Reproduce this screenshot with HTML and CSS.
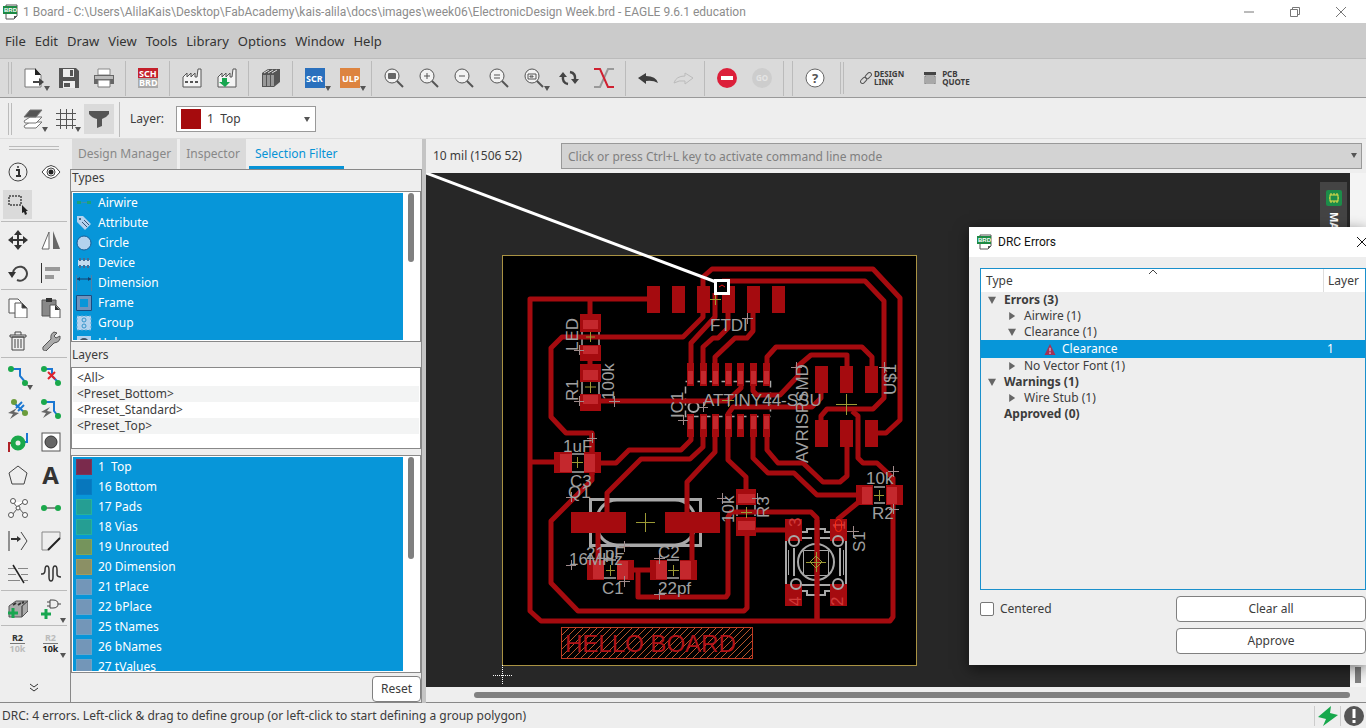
FILE: index.html
```html
<!DOCTYPE html>
<html lang="en">
<head>
    <meta charset="UTF-8">
    <meta name="viewport" content="width=device-width, initial-scale=1.0">
    <title>1 Board - EAGLE 9.6.1 education</title>
    <link rel="stylesheet" href="styles.css">
</head>
<body>
    <header class="titlebar">
        <svg class="app-icon" viewBox="0 0 16 16"><path d="M3 1h11v11l-3 3H3z" fill="#fff" stroke="#555"/><path d="M11 15v-3h3z" fill="#555"/><rect x="0" y="2" width="14" height="8" fill="#1d8a43"/><text x="1" y="8" class="brd">BRD</text></svg>
        <span class="title">1 Board - C:\Users\AlilaKais\Desktop\FabAcademy\kais-alila\docs\images\week06\ElectronicDesign Week.brd - EAGLE 9.6.1 education</span>
        <div class="window-buttons">
            <button aria-label="Minimize"><svg viewBox="0 0 12 12"><path d="M1 6h10"/></svg></button>
            <button aria-label="Restore"><svg viewBox="0 0 12 12"><path d="M1.500 3.500h7v7h-7zM3.500 3.500v-2h7v7h-2"/></svg></button>
            <button aria-label="Close"><svg viewBox="0 0 12 12"><path d="M1 1l10 10M11 1L1 11"/></svg></button>
        </div>
    </header>

    <nav class="menubar">
        <a href="#">File</a>
        <a href="#">Edit</a>
        <a href="#">Draw</a>
        <a href="#">View</a>
        <a href="#">Tools</a>
        <a href="#">Library</a>
        <a href="#">Options</a>
        <a href="#">Window</a>
        <a href="#">Help</a>
    </nav>

    <div class="toolbar actions">
        <span class="handle"></span>
        <button class="tool drop" aria-label="Export"><svg viewBox="0 0 20 20"><path d="M1 1h10l6 6v12H1z" fill="#fff" stroke="#777"/><path d="M11 0v7h6z" fill="#222"/><path d="M9 13h6v-3l5 4-5 4v-3H9z" fill="#444"/></svg></button>
        <button class="tool" aria-label="Save"><svg viewBox="0 0 20 20"><path d="M0 0h17l3 3v17H0z" fill="#555"/><path d="M4 1h11v8H4zM4 13h12v7H4z" fill="#eee"/><path d="M11 2h3v6h-3zM5 15h6v4H5z" fill="#555"/></svg></button>
        <button class="tool" aria-label="Print"><svg viewBox="0 0 20 20"><path d="M4 1h12v6H4z" fill="#fff" stroke="#888"/><path d="M0 7h20v9H0z" fill="#666"/><path d="M1 8h18v3H1z" fill="#bbb"/><path d="M4 12h12v7H4z" fill="#fff" stroke="#777"/></svg></button>
        <span class="sep"></span>
        <button class="tool" aria-label="Schematic"><svg viewBox="0 0 20 20"><rect width="20" height="10" fill="#c4202b"/><rect y="10" width="20" height="10" fill="#aaa"/><text x="1" y="9" class="tag">SCH</text><text x="1" y="18" class="tag">BRD</text></svg></button>
        <span class="sep"></span>
        <button class="tool" aria-label="Manufacturing"><svg viewBox="0 0 20 20" fill="none" stroke="#555"><path d="M1 19V9l4-4v4l4-4v4l4-4v4h2l1-8h3v18z" fill="#f4f4f4"/><path d="M3 14h3M8 14h3M13 14h3" stroke-width="2"/></svg></button>
        <button class="tool" aria-label="CAM"><svg viewBox="0 0 20 20" fill="none" stroke="#555"><path d="M1 19V9l4-4v4l4-4v4l4-4v4h2l1-8h3v18z" fill="#f4f4f4"/><path d="M5 10h5v4h3l-5 5-6-5h3z" fill="#18a650" stroke="none"/></svg></button>
        <span class="sep"></span>
        <button class="tool" aria-label="Library"><svg viewBox="0 0 20 20"><path d="M1 5l6-4h12v13l-6 5H1z" fill="#555"/><path d="M2 7h3v11H2zM6 7h3v11H6zM10 7h3v11h-3z" fill="#999"/><path d="M3 5l5-3M7 5l5-3M11 5l5-3" stroke="#ddd"/></svg></button>
        <span class="sep"></span>
        <button class="tool drop" aria-label="Script"><svg viewBox="0 0 20 20"><rect width="20" height="20" fill="#2a70bd"/><text x="1" y="14" class="tag">SCR</text></svg></button>
        <button class="tool drop" aria-label="ULP"><svg viewBox="0 0 20 20"><rect width="20" height="20" fill="#dd8440"/><text x="2" y="14" class="tag">ULP</text></svg></button>
        <span class="sep"></span>
        <button class="tool" aria-label="Zoom fit"><svg viewBox="0 0 20 20"><g class="lens"><circle cx="8" cy="8" r="7"/><path d="M13 13l6 6" stroke-width="2"/></g><rect x="4" y="5" width="8" height="6" rx="1" fill="#666"/></svg></button>
        <button class="tool" aria-label="Zoom in"><svg viewBox="0 0 20 20" class="lens"><circle cx="8" cy="8" r="7"/><path d="M13 13l6 6" stroke-width="2"/><path d="M5 8h6M8 5v6"/></svg></button>
        <button class="tool" aria-label="Zoom out"><svg viewBox="0 0 20 20" class="lens"><circle cx="8" cy="8" r="7"/><path d="M13 13l6 6" stroke-width="2"/><path d="M5 8h6"/></svg></button>
        <button class="tool" aria-label="Zoom redraw"><svg viewBox="0 0 20 20" class="lens"><circle cx="8" cy="8" r="7"/><path d="M13 13l6 6" stroke-width="2"/><path d="M5 7h6M5 10h6"/></svg></button>
        <button class="tool drop" aria-label="Zoom select"><svg viewBox="0 0 20 20" class="lens"><circle cx="8" cy="8" r="7"/><path d="M13 13l6 6" stroke-width="2"/><path d="M4 6h8v5H4zM6 8h3v1H6z"/></svg></button>
        <button class="tool" aria-label="Refresh"><svg viewBox="0 0 20 20" fill="none" stroke="#444" stroke-width="2.500"><path d="M9 16Q3 15 4 8M11 4q6 1 5 8"/><path d="M4 4l4 5H0zM16 16l-4-5h8z" fill="#444" stroke="none"/></svg></button>
        <button class="tool" aria-label="Switch"><svg viewBox="0 0 20 20" fill="none" stroke-width="2"><path d="M20 1h-6L6 19H0" stroke="#999"/><path d="M0 1h6l8 18h6" stroke="#cf2030"/></svg></button>
        <span class="sep"></span>
        <button class="tool" aria-label="Undo"><svg viewBox="0 0 20 20"><path d="M0 10l8-5v3q10 0 12 7-5-3-12-2v3z" fill="#3c3c3c"/></svg></button>
        <button class="tool" aria-label="Redo"><svg viewBox="0 0 20 20"><path d="M20 10l-8-5v3Q3 8 1 15q5-3 11-2v3z" fill="none" stroke="#bbb"/></svg></button>
        <span class="sep"></span>
        <button class="tool" aria-label="Stop"><svg viewBox="0 0 20 20"><circle cx="10" cy="10" r="10" fill="#dc1f3a"/><path d="M4 8h12v4H4z" fill="#fff"/></svg></button>
        <button class="tool" aria-label="Go"><svg viewBox="0 0 20 20"><circle cx="10" cy="10" r="10" fill="#cdcdcd"/><text x="4" y="13" class="go">GO</text></svg></button>
        <span class="sep"></span>
        <span class="sep"></span>
        <button class="tool" aria-label="Help"><svg viewBox="0 0 20 20"><circle cx="10" cy="10" r="9" fill="#fff" stroke="#666"/><text x="7" y="15" class="question">?</text></svg></button>
        <span class="handle"></span>
        <button class="link-tool"><svg viewBox="0 0 12 12" fill="none" stroke="#555"><rect x="0" y="6" width="7" height="4" rx="2" transform="rotate(-45 4 8)"/><rect x="5" y="2" width="7" height="4" rx="2" transform="rotate(-45 8 4)"/></svg><span>DESIGN<br>LINK</span></button>
        <button class="link-tool"><svg viewBox="0 0 12 12"><path d="M0 0h12v3H0z" fill="#444"/><path d="M1 4h10v8H1zM2 6h8M2 8h8M2 10h8" fill="none" stroke="#777"/></svg><span>PCB<br>QUOTE</span></button>
    </div>

    <div class="toolbar options">
        <span class="handle"></span>
        <button class="tool drop" aria-label="Layers"><svg viewBox="0 0 20 20" stroke="#777"><path d="M1 17l6-4h12l-6 6H2z" fill="#fff"/><path d="M1 12l6-4h12l-6 6H2z" fill="#fff"/><path d="M1 8l6-7h12l-6 7z" fill="#555"/></svg></button>
        <button class="tool drop" aria-label="Grid"><svg viewBox="0 0 20 20" stroke="#555"><path d="M4.500 0v20M10.500 0v20M16.500 0v20M0 4.500h20M0 10.500h20M0 16.500h20"/></svg></button>
        <button class="tool active" aria-label="Filter"><svg viewBox="0 0 20 20"><path d="M0 2h20v3q-3 4-7 5v7l-5 2v-9Q3 9 0 5z" fill="#555"/></svg></button>
        <span class="sep"></span>
        <label for="layer">Layer:</label>
        <div class="layer-select">
            <span class="swatch"></span>
            <select id="layer"><option>1&nbsp; Top</option></select>
        </div>
    </div>

    <main class="workspace">
        <aside class="palette">
            <span class="grip"></span>
            <div class="tools">
                <button aria-label="Info"><svg viewBox="0 0 20 20"><circle cx="10" cy="10" r="9" fill="none" stroke="#444"/><path d="M8 8h3v6h2M8 14h3" fill="none" stroke="#333" stroke-width="2"/><circle cx="10" cy="5" r="1" fill="#333"/></svg></button>
                <button aria-label="Show"><svg viewBox="0 0 20 20"><path d="M1 10q9-13 18 0-9 13-18 0z" fill="#fff" stroke="#444"/><circle cx="10" cy="10" r="4" fill="none" stroke="#444"/><circle cx="10" cy="10" r="2.500" fill="#222"/></svg></button>
                <button class="active" aria-label="Group"><svg viewBox="0 0 20 20"><rect x="1" y="1" width="12" height="9" fill="none" stroke="#444" stroke-width="1.500" stroke-dasharray="2 1"/><path d="M14 10v8l2-1 1 3 2-1-1-3h2z" fill="#222"/></svg></button>
                <span></span>
                <hr>
                <button aria-label="Move"><svg viewBox="0 0 20 20"><path d="M10 0l4 5h-3v4h4V6l5 4-5 4v-3h-4v4h3l-4 5-4-5h3v-4H5v3l-5-4 5-4v3h4V5H6z" fill="#333"/></svg></button>
                <button aria-label="Mirror"><svg viewBox="0 0 20 20"><path d="M8 2v17H1z" fill="#fff" stroke="#666"/><path d="M12 1v18h7z" fill="#666"/></svg></button>
                <button aria-label="Rotate"><svg viewBox="0 0 20 20"><path d="M5 10a7 7 0 1 1 4 7" fill="none" stroke="#444" stroke-width="2"/><path d="M0 9h8l-4 6z" fill="#333"/></svg></button>
                <button aria-label="Align"><svg viewBox="0 0 20 20"><path d="M.500 0v20" stroke="#333"/><path d="M4 4h15v4H4zM4 12h9v4H4z" fill="#999"/></svg></button>
                <hr>
                <button aria-label="Copy"><svg viewBox="0 0 20 20" fill="#fff" stroke="#555"><path d="M1 1h9l3 3v11H1z"/><path d="M7 5h7l5 5v10H7z"/><path d="M14 5v5h5z" fill="#333"/></svg></button>
                <button aria-label="Paste"><svg viewBox="0 0 20 20"><path d="M1 2h14v16H1z" fill="#888" stroke="#555"/><path d="M5 0h6v4H5z" fill="#333"/><path d="M9 7h6l4 4v9H9z" fill="#fff" stroke="#555"/><path d="M14 7v5h5z" fill="#333"/></svg></button>
                <button aria-label="Delete"><svg viewBox="0 0 20 20" fill="none" stroke="#444"><path d="M4 6h12v13H4zM2 4h16v2H2zM7 4V1h6v3"/><path d="M7 8v9M10 8v9M13 8v9"/></svg></button>
                <button aria-label="Change"><svg viewBox="0 0 20 20"><path d="M2 16l8-8q-1-5 3-7l3 1-3 3 2 2 4-2q1 6-6 7l-8 8q-4 0-3-4z" fill="#aaa" stroke="#555"/></svg></button>
                <hr>
                <button class="drop" aria-label="Route"><svg viewBox="0 0 20 20"><path d="M2 3h10v7l6 7" fill="none" stroke="#1b77d2" stroke-width="2"/><circle cx="3" cy="3" r="3" fill="#1aa84b"/><circle cx="17" cy="17" r="3" fill="#1aa84b"/></svg></button>
                <button aria-label="Ripup"><svg viewBox="0 0 20 20"><path d="M2 3h9v7l7 7" fill="none" stroke="#1b77d2" stroke-width="2"/><circle cx="3" cy="3" r="3" fill="#1aa84b"/><circle cx="17" cy="17" r="3" fill="#1aa84b"/><path d="M7 6l7 7M14 6l-7 7" stroke="#e0222c" stroke-width="2"/></svg></button>
                <button aria-label="Autoroute"><svg viewBox="0 0 20 20"><path d="M5 3l12 11" stroke="#1b77d2" stroke-width="2"/><path d="M8 9l6-6M10 12l6-6" stroke="#1b77d2" stroke-width="2"/><circle cx="6" cy="3" r="3" fill="#6b9c3c"/><circle cx="17" cy="14" r="3" fill="#6b9c3c"/><path d="M9 9l-9 5 5 1-3 5 9-6-5-1z" fill="#666"/></svg></button>
                <button aria-label="Quick route"><svg viewBox="0 0 20 20"><path d="M2 3h11v9l4 5" fill="none" stroke="#1b77d2" stroke-width="2"/><circle cx="3" cy="3" r="3" fill="#1aa84b"/><circle cx="17" cy="17" r="3" fill="#1aa84b"/><path d="M9 8l-9 5 5 1-3 5 9-6-5-1z" fill="#666"/></svg></button>
                <button aria-label="Via"><svg viewBox="0 0 20 20"><path d="M1 20v-9h6" fill="none" stroke="#b02228" stroke-width="2"/><path d="M14 10h5V1" fill="none" stroke="#1b77d2" stroke-width="2"/><circle cx="10" cy="11" r="5" fill="#e9eeea" stroke="#1aa84b" stroke-width="5"/></svg></button>
                <button aria-label="Hole"><svg viewBox="0 0 20 20"><rect x="1" y="1" width="18" height="18" fill="#fff" stroke="#555"/><circle cx="10" cy="10" r="6" fill="#666" stroke="#333"/></svg></button>
                <button aria-label="Polygon"><svg viewBox="0 0 20 20"><path d="M10 1l9 7-3 11H4L1 8z" fill="none" stroke="#444"/></svg></button>
                <button aria-label="Text"><span class="letter">A</span></button>
                <button aria-label="Ratsnest"><svg viewBox="0 0 20 20" fill="#fff" stroke="#555"><path d="M5 4l4 5 7-5M10 9l6 7M4 17l5-6"/><circle cx="5" cy="3" r="2.500"/><circle cx="17" cy="4" r="2.500"/><circle cx="10" cy="10" r="2"/><circle cx="3" cy="17" r="2.500"/><circle cx="17" cy="17" r="2.500"/></svg></button>
                <button aria-label="Signal"><svg viewBox="0 0 20 20"><path d="M2 10h16" stroke="#888" stroke-width="2"/><circle cx="3" cy="10" r="3" fill="#1aa84b"/><circle cx="17" cy="10" r="3" fill="#1aa84b"/></svg></button>
                <button aria-label="Split"><svg viewBox="0 0 20 20"><path d="M1 0v20" stroke="#333"/><path d="M13 1l6 9-6 9" fill="none" stroke="#444"/><path d="M3 8h9" stroke="#333" stroke-width="2"/><path d="M9 5l4 3-4 3z" fill="#333"/></svg></button>
                <button aria-label="Miter"><svg viewBox="0 0 20 20"><path d="M7 19H1V1h18v6" fill="none" stroke="#888"/><path d="M7 19L19 7" stroke="#222" stroke-width="2"/></svg></button>
                <button aria-label="Slice"><svg viewBox="0 0 20 20"><path d="M0 4.500h7M10 4.500h10M0 10.500h8M13 10.500h7M0 16.500h12M16 16.500h4" stroke="#888"/><path d="M5 1l11 18" stroke="#222" stroke-width="1.500"/></svg></button>
                <button aria-label="Meander"><svg viewBox="0 0 20 20"><path d="M0 10h1q3 0 3-4 0-4 2-4t2 4v7q0 4 2 4t2-4V6q0-4 2-4t2 4v4q0 3 4 3" fill="none" stroke="#333" stroke-width="1.500"/></svg></button>
                <hr>
                <button aria-label="Add part"><svg viewBox="0 0 20 20"><path d="M1 7l7-5h12l-6 5v11H1zM14 7l6-5v10l-6 6z" fill="#aaa" stroke="#555"/><path d="M5 6l3-2M10 6l3-2M14 4l2-1" stroke="#333" stroke-width="2"/><path d="M0 14h10M5 9v10" stroke="#18a650" stroke-width="3"/></svg></button>
                <button class="drop" aria-label="Add gate"><svg viewBox="0 0 20 20"><path d="M9 1h3q5 0 5 4t-5 4H9zM6 3h3M6 7h3M17 5h3" fill="none" stroke="#444"/><path d="M0 15h10M5 10v10" stroke="#18a650" stroke-width="3"/></svg></button>
                <hr>
                <button aria-label="Name"><span class="fraction">R2<i>10k</i></span></button>
                <button class="drop" aria-label="Value"><span class="fraction value">R2<i>10k</i></span></button>
            </div>
            <button class="more" aria-label="More"><svg viewBox="0 0 10 10" fill="none" stroke="#333"><path d="M1 1l4 3 4-3M1 5l4 3 4-3"/></svg></button>
        </aside>

        <section class="panel">
            <div class="tabs">
                <button>Design Manager</button>
                <button>Inspector</button>
                <button class="current">Selection Filter</button>
            </div>
            <div class="panel-body">
                <h2>Types</h2>
                <div class="listbox types">
                    <ul>
                        <li><svg viewBox="0 0 16 16"><path d="M1 7.500h14" stroke="#3a8fae"/><path d="M1 7.500h4M11 7.500h4" stroke="#18a27c" stroke-width="3"/></svg>Airwire</li>
                        <li><svg viewBox="0 0 16 16"><path d="M1 1h6l8 8-6 6-8-8z" fill="#b3d2ee"/><circle cx="4" cy="4" r="1" fill="#246"/><path d="M6 7l5 5M8 5l5 5" stroke="#357"/></svg>Attribute</li>
                        <li><svg viewBox="0 0 16 16"><circle cx="8" cy="8" r="7" fill="#b3d2ee" stroke="#155d97"/></svg>Circle</li>
                        <li><svg viewBox="0 0 16 16"><path d="M2 5h12v6H2z" fill="#c2dbef"/><path d="M4 3v3M8 3v3M12 3v3M4 10v3M8 10v3M12 10v3" stroke="#456b94" stroke-width="2"/></svg>Device</li>
                        <li><svg viewBox="0 0 16 16"><path d="M.500 0v16M15.500 0v16" stroke="#5180a8"/><path d="M1 4h14" stroke="#163f6c"/><path d="M1 4l3-2v4zM15 4l-3-2v4z" fill="#163f6c"/></svg>Dimension</li>
                        <li><svg viewBox="0 0 16 16"><rect x="2" y="2" width="12" height="12" fill="#0796d9" stroke="#7194bd" stroke-width="4"/><path d="M0.500.500h15v15H.500z" fill="none" stroke="#184c81"/></svg>Frame</li>
                        <li><svg viewBox="0 0 16 16"><rect x="1" y="1" width="14" height="14" fill="#b3d2ee" stroke="#5ea8d5" stroke-dasharray="2"/><circle cx="8" cy="5" r="2" fill="none" stroke="#3494c9"/><circle cx="8" cy="11" r="2" fill="none" stroke="#3494c9"/></svg>Group</li>
                        <li><svg viewBox="0 0 16 16"><rect x="1" y="1" width="14" height="14" fill="#b3d2ee"/><circle cx="8" cy="8" r="5" fill="#456"/></svg>Hole</li>
                    </ul>
                    <span class="scroll"></span>
                </div>
                <h2 class="layers-title">Layers</h2>
                <ul class="presets">
                    <li>&lt;All&gt;</li>
                    <li>&lt;Preset_Bottom&gt;</li>
                    <li>&lt;Preset_Standard&gt;</li>
                    <li>&lt;Preset_Top&gt;</li>
                </ul>
                <div class="listbox layers">
                    <ul>
                        <li><span class="chip top"></span>1&nbsp; Top</li>
                        <li><span class="chip bottom"></span>16 Bottom</li>
                        <li><span class="chip green"></span>17 Pads</li>
                        <li><span class="chip green"></span>18 Vias</li>
                        <li><span class="chip olive"></span>19 Unrouted</li>
                        <li><span class="chip sand"></span>20 Dimension</li>
                        <li><span class="chip"></span>21 tPlace</li>
                        <li><span class="chip"></span>22 bPlace</li>
                        <li><span class="chip"></span>25 tNames</li>
                        <li><span class="chip"></span>26 bNames</li>
                        <li><span class="chip"></span>27 tValues</li>
                    </ul>
                    <span class="scroll"></span>
                </div>
                <button class="push reset">Reset</button>
            </div>
        </section>

        <section class="editor">
            <div class="command">
                <span class="coords">10 mil (1506 52)</span>
                <div class="command-line"><input type="text" aria-label="Command line" placeholder="Click or press Ctrl+L key to activate command line mode"></div>
            </div>
            <div class="canvas-row">
                <svg class="board" viewBox="426 173 924 514" preserveAspectRatio="xMinYMin slice">
                    <defs>
                        <pattern id="hatch" width="7" height="7" patternUnits="userSpaceOnUse"><path d="M-1 8L8-1M-1 1l2-2M6 8l2-2" stroke="#b8562c"/></pattern>
                    </defs>
                    <rect x="502.500" y="255.500" width="414" height="410" fill="#000" stroke="#a99243"/>

                    <!-- part outlines -->
                    <g class="outline">
                        <rect x="685.500" y="381.500" width="85" height="35" stroke-width="1.500" stroke-dasharray="7 5"/>
                        <rect x="590.500" y="499.500" width="110" height="46" stroke-width="3"/>
                        <rect x="597" y="500" width="98" height="45" rx="20" stroke-width="3"/>
                        <path d="M582 331v15M599 331v15M582 381v14M599 381v14M737 501v15M755 501v15M572 454h12M572 472h12M604 560h12M604 578h12M667 560h12M667 578h12M874 487h11M874 503h11" stroke-width="1.500"/>
                        <circle cx="693.500" cy="407" r="5"/>
                    </g>

                    <!-- copper traces -->
                    <g class="trace">
                        <path d="M650 299H530v312l11 10h349l3-4V478l-16-15h-14l-5-5v-42l-6-5"/>
                        <path d="M590 299v20M590 355v15M530 462h30"/>
                        <path d="M592 475v-42h-26l-15-16v-69l11-11h121l20-20v-40l9-8h161l27 29v122l-14 13h-15"/>
                        <path d="M592 433v47l-41 41v62l27 28h166l3-3v-75"/>
                        <path d="M722 281h143l19 20v97l-11 11h-46l-6 7v10"/>
                        <path d="M715 293v24l-24 26v30"/>
                        <path d="M728 310v18l-10 10h-5l-10 9v26"/>
                        <path d="M753 310v21l-6 7h-12l-20 19v15"/>
                        <path d="M767 372v-15l9-10h86l10 10v15"/>
                        <path d="M753 380v11l4 4h23l18-19v-10l13-11h36v15"/>
                        <path d="M741 380v8l-14 13H600"/>
                        <path d="M746 490v-13l-18-17v-46l5-7h79l9-9v-8"/>
                        <path d="M691 425v15l-10 10h-52l-13 13h-16"/>
                        <path d="M703 425v22l-13 12h-49l-34 34v22"/>
                        <path d="M715 425v27l-28 30v34"/>
                        <path d="M753 425v33l15 15h26l23 22h44"/>
                        <path d="M767 425v25l11 13h25l20 19h17l7-6v-40"/>
                        <path d="M638 570v27h88l2-3v-77l3-5h80l6 6v103"/>
                        <path d="M625 570h30M598 520v45M692 520v45M753 530h40M860 501l-22 18v10"/>
                    </g>

                    <!-- pads -->
                    <g class="pad">
                        <path d="M647 286h13v27h-13zM672 286h13v27h-13zM697 286h13v27h-13zM722 286h13v27h-13zM747 286h13v27h-13zM772 286h13v27h-13z"/>
                        <path d="M815 366h13v27h-13zM840 366h13v27h-13zM865 366h13v27h-13zM815 420h13v27h-13zM840 420h13v27h-13zM865 420h13v27h-13z"/>
                        <path d="M571 512h55v21h-55zM665 512h55v21h-55z"/>
                        <path d="M580 314h21v18h-21zM580 345h21v16h-21zM580 364h21v18h-21zM580 394h21v17h-21z"/>
                        <path d="M554 452h18v21h-18zM584 452h17v21h-17zM587 560h17v20h-17zM617 560h17v20h-17zM650 560h17v20h-17zM680 560h17v20h-17zM856 485h17v20h-17zM886 485h17v20h-17z"/>
                        <path d="M736 489h20v16h-20zM736 517h20v19h-20z"/>
                        <path d="M785 519h17v22h-17zM830 519h17v22h-17zM785 584h17v22h-17zM830 584h17v22h-17z"/>
                        <path d="M687 363h7v23h-7zM700 363h7v23h-7zM712 363h7v23h-7zM725 363h7v23h-7zM737 363h7v23h-7zM750 363h7v23h-7zM763 363h7v23h-7z"/>
                        <path d="M687 414h7v23h-7zM700 414h7v23h-7zM712 414h7v23h-7zM725 414h7v23h-7zM737 414h7v23h-7zM750 414h7v23h-7zM763 414h7v23h-7z"/>
                    </g>
                    <g class="mask">
                        <path d="M583 320h15v9h-15zM583 346h15v8h-15zM583 370h15v10h-15zM583 395h15v9h-15z"/>
                        <path d="M560 454h12v18h-12zM584 454h11v18h-11zM593 561h11v18h-11zM617 561h11v18h-11zM656 561h11v18h-11zM680 561h11v18h-11zM862 487h10v17h-10zM887 487h10v17h-10z"/>
                        <path d="M738 494h17v9h-17zM738 521h17v9h-17z"/>
                        <path d="M688 371h5v13h-5zM701 371h5v13h-5zM713 371h5v13h-5zM726 371h5v13h-5zM738 371h5v13h-5zM751 371h5v13h-5zM764 371h5v13h-5z"/>
                        <path d="M688 416h5v13h-5zM701 416h5v13h-5zM713 416h5v13h-5zM726 416h5v13h-5zM738 416h5v13h-5zM751 416h5v13h-5zM764 416h5v13h-5z"/>
                    </g>

                    <!-- push button S1 -->
                    <g class="outline">
                        <circle cx="816" cy="562" r="18"/>
                        <path d="M803.500 550.500h25v25h-25z" stroke-width="1"/>
                        <path d="M786 541v43M846 541v43M794 548v28M840 548v28M802 532h5v-3h18v3h5M802 591h5v4h18v-4h5M802 538h10M820 538h10M802 585h28"/>
                        <path d="M788.500 550v25M843.500 550v25" stroke-width="1"/>
                        <circle cx="794" cy="541" r="5"/><circle cx="838" cy="541" r="5"/><circle cx="796" cy="584" r="5"/><circle cx="838" cy="584" r="5"/>
                    </g>
                    <path class="trace" d="M817 520v100"/>

                    <!-- origins -->
                    <path class="origin" d="M586 337h9M590.500 332v10M585 387h11M590.500 382v11M572 462.500h11M577.500 457v11M606 570.500h9M610.500 565v11M668 570.500h11M673.500 565v11M874 495.500h10M879.500 490v11M741 512.500h11M746.500 507v11M636 522.500h19M645.500 513v19M836 404.500h21M846.500 394v21M710 299.500h11M715.500 294v11M722 400.500h12M728.500 394v13M806 562.500h20M816.500 552v20M810 562l6-6 6 6-6 6z"/>
                    <path class="cross" d="M574 350.500h10M579.500 345v10M574 401.500h10M579.500 396v10M609 401.500h11M614.500 396v11M587 438.500h10M592.500 433v10M566 497.500h10M571.500 492v10M566 565.500h10M571.500 560v10M619 546.500h11M624.500 541v11M619 581.500h11M624.500 576v11M654 558.500h11M659.500 553v11M654 594.500h11M659.500 589v11M742 318.500h11M747.500 313v11M791 367.500h11M796.500 362v11M879 367.500h11M884.500 362v11M678 420.500h10M683.500 415v10M698 407.500h10M703.500 402v10M888 471.500h11M893.500 466v11M889 509.500h10M893.500 504v10M717 498.500h11M722.500 493v11M752 498.500h11M757.500 493v11M847 531.500h12M853.500 526v12"/>

                    <g class="label">
                        <text x="710" y="331">FTDI</text>
                        <text x="703" y="406">ATTINY44-SSU</text>
                        <text x="563" y="452">1uF</text>
                        <text x="570" y="487">C3</text>
                        <text x="568" y="498">Q1</text>
                        <text x="586" y="559">21pF</text>
                        <text x="569" y="565">16MHz</text>
                        <text x="658" y="558">C2</text>
                        <text x="602" y="594">C1</text>
                        <text x="658" y="594">22pf</text>
                        <text x="866" y="484">10k</text>
                        <text x="872" y="519">R2</text>
                        <text transform="translate(578 351) rotate(-90)">LED</text>
                        <text transform="translate(578 401) rotate(-90)">R1</text>
                        <text transform="translate(614 400) rotate(-90)">100k</text>
                        <text transform="translate(683 418) rotate(-90)">IC1</text>
                        <text transform="translate(808 463) rotate(-90)">AVRISPSMD</text>
                        <text transform="translate(896 395) rotate(-90)">U$1</text>
                        <text transform="translate(734 523) rotate(-90)">10k</text>
                        <text transform="translate(769 518) rotate(-90)">R3</text>
                        <text transform="translate(865 552) rotate(-90)">S1</text>
                        <g class="pin">
                            <text transform="translate(801 527) rotate(-90)">3</text>
                            <text transform="translate(845 530) rotate(-90)">1</text>
                            <text transform="translate(801 606) rotate(-90)">4</text>
                            <text transform="translate(843 606) rotate(-90)">2</text>
                        </g>
                    </g>
                    <rect x="835.500" y="519.500" width="6" height="12" rx="3" fill="none" stroke="#ff2a12"/>

                    <rect x="561.500" y="627.500" width="191" height="31" fill="url(#hatch)" stroke="#c03a22"/>
                    <text class="hello" x="565" y="652">HELLO BOARD</text>

                    <path d="M426 173l290 109" stroke="#fff" stroke-width="3"/>
                    <rect x="715.500" y="280.500" width="13" height="13" fill="#000" stroke="#fff" stroke-width="3"/>
                    <path d="M719 287l3-2 3 2" fill="none" stroke="#e11"/>
                    <path d="M493 675.500h20M502.500 665v20" stroke="#fff" stroke-dasharray="1 1"/>
                </svg>
                <div class="side-tab">
                    <svg viewBox="0 0 16 16"><rect width="16" height="16" rx="2" fill="#1c8d49"/><path d="M5 3v10M8 3v10M11 3v10M3 8h10" stroke="#e8e04a"/><rect x="4" y="5" width="8" height="6" fill="#1c8d49" stroke="#e8e04a"/></svg>
                    <span>MANUFACTURING</span>
                </div>
                <div class="v-scroll"></div>
            </div>
            <div class="h-scroll"></div>

            <div class="dialog" role="dialog" aria-labelledby="drc-title">
                <div class="dialog-title">
                    <svg class="app-icon" viewBox="0 0 16 16"><path d="M3 1h11v11l-3 3H3z" fill="#fff" stroke="#555"/><path d="M11 15v-3h3z" fill="#555"/><rect x="0" y="2" width="14" height="8" fill="#1d8a43"/><text x="1" y="8" class="brd">BRD</text></svg>
                    <span id="drc-title">DRC Errors</span>
                    <button aria-label="Close"><svg viewBox="0 0 9 10"><path d="M0 0l10 10M10 0L0 10" stroke="#111"/></svg></button>
                </div>
                <div class="errors">
                    <table>
                        <thead>
                            <tr><th>Type<svg class="sort" viewBox="0 0 8 4"><path d="M0 4l4-4 4 4" fill="none" stroke="#444"/></svg></th><th class="layer-col">Layer</th></tr>
                        </thead>
                        <tbody>
                            <tr class="group"><td><span class="arrow open"></span>Errors (3)</td><td></td></tr>
                            <tr class="item"><td><span class="arrow"></span>Airwire (1)</td><td></td></tr>
                            <tr class="item"><td><span class="arrow open"></span>Clearance (1)</td><td></td></tr>
                            <tr class="selected"><td><svg viewBox="0 0 12 12"><path d="M6 0l6 12H0z" fill="#a23255"/><path d="M6 4v4M6 9v2" stroke="#d9b6d0" stroke-width="1.500"/></svg>Clearance</td><td>1</td></tr>
                            <tr class="item"><td><span class="arrow"></span>No Vector Font (1)</td><td></td></tr>
                            <tr class="group"><td><span class="arrow open"></span>Warnings (1)</td><td></td></tr>
                            <tr class="item"><td><span class="arrow"></span>Wire Stub (1)</td><td></td></tr>
                            <tr class="group"><td><span class="arrow none"></span>Approved (0)</td><td></td></tr>
                        </tbody>
                    </table>
                </div>
                <div class="dialog-foot">
                    <label><input type="checkbox">Centered</label>
                    <div class="dialog-buttons">
                        <button class="push">Clear all</button>
                        <button class="push">Approve</button>
                    </div>
                </div>
            </div>
        </section>
    </main>

    <footer class="statusbar">
        <span class="status-text">DRC: 4 errors. Left-click &amp; drag to define group (or left-click to start defining a group polygon)</span>
        <svg viewBox="0 0 20 20"><path d="M13 0L0 11l8 2-3 7 15-11-8-2z" fill="#17a84c"/></svg>
        <svg viewBox="0 0 20 20"><circle cx="10" cy="10" r="10" fill="#555"/><path d="M10 3v9M10 14v3" stroke="#fff" stroke-width="3"/></svg>
    </footer>
</body>
</html>
```
FILE: styles.css
```css
* {
    box-sizing: border-box;
}
body {
    margin: 0;
    height: 100vh;
    display: flex;
    flex-direction: column;
    overflow: hidden;
    background: #eee;
    color: #3c3c3c;
    font: 12px/16px "Noto Sans", sans-serif;
}
button, input, select {
    font: inherit;
    color: inherit;
}
button {
    padding: 0;
    border: 0;
    background: none;
}
ul, h2 {
    margin: 0;
    padding: 0;
    font: inherit;
    list-style: none;
}
svg {
    display: block;
    flex: none;
}

/* title and menu */
.titlebar {
    display: flex;
    align-items: center;
    height: 23px;
    padding-left: 3px;
    background: #fff;
    color: #8c8c8c;
}
.app-icon {
    width: 16px;
    height: 16px;
    margin-right: 4px;
}
.brd {
    font: bold 6px "Liberation Sans", sans-serif;
    fill: #fff;
}
.title {
    flex: 1;
    font-family: Roboto, sans-serif;
    white-space: nowrap;
}
.window-buttons {
    display: flex;
}
.window-buttons button {
    width: 46px;
    padding-left: 15px;
}
.window-buttons svg {
    width: 12px;
    height: 12px;
    fill: none;
    stroke: #777;
}
.menubar {
    display: flex;
    align-items: center;
    gap: 9px;
    height: 35px;
    padding-left: 5px;
    background: #cbcbcb;
    font-size: 13px;
}
.menubar a {
    color: #333;
    text-decoration: none;
}

/* toolbars */
.toolbar {
    display: flex;
    align-items: center;
    height: 40px;
    padding-left: 8px;
    border-top: 1px solid #bbb;
    border-bottom: 1px solid #999;
    background: #dadada;
}
.toolbar.options {
    height: 41px;
    padding-top: 2px;
    border-top: 0;
    border-bottom: 1px solid #ddd;
    background: #eee;
}
.handle {
    width: 4px;
    height: 32px;
    margin-right: 4px;
    border: solid #bbb;
    border-width: 0 1px;
}
.sep {
    width: 1px;
    height: 35px;
    margin: 0 4px;
    background: #bbb;
}
.tool {
    position: relative;
    display: flex;
    align-items: center;
    justify-content: center;
    width: 35px;
    height: 30px;
}
.tool svg {
    width: 20px;
    height: 20px;
}
.options .tool {
    width: 33px;
}
.options .active {
    width: 30px;
    margin: 0 1px 0 2px;
}
.drop::after {
    content: "";
    position: absolute;
    right: 1px;
    bottom: 2px;
    border: 3px solid transparent;
    border-top: 5px solid #555;
    border-bottom: 0;
}
.active {
    background: #dadada;
}
.lens {
    fill: none;
    stroke: #555;
}
.lens circle {
    fill: #f2f2f2;
}
.tag {
    font: bold 9px "Noto Sans", sans-serif;
    fill: #fff;
}
.go {
    font: bold 8px "Noto Sans", sans-serif;
    fill: #e4e4e4;
}
.question {
    font: bold 13px "Noto Sans", sans-serif;
    fill: #555;
}
.actions .tool + .handle {
    margin: 0 16px 0 8px;
}
.link-tool {
    display: flex;
    align-items: center;
    gap: 2px;
    margin-right: 20px;
    font: bold 8px/8px "Noto Sans", sans-serif;
    text-align: left;
}
.link-tool + .link-tool svg {
    margin-right: 4px;
}
.link-tool svg {
    width: 12px;
    height: 12px;
}
.options label {
    margin: 0 12px 0 6px;
}
.layer-select {
    position: relative;
    display: flex;
    align-items: center;
    width: 140px;
    height: 26px;
    border: 1px solid #999;
    background: #fff;
}
.layer-select .swatch {
    width: 20px;
    height: 20px;
    margin: 0 6px 0 4px;
    background: #a50b0d;
}
.layer-select select {
    flex: 1;
    appearance: none;
    padding: 0;
    border: 0;
    background: none;
}
.layer-select::after, .command-line::after {
    content: "";
    position: absolute;
    right: 5px;
    top: 10px;
    border: 3px solid transparent;
    border-top: 5px solid #555;
    border-bottom: 0;
}

/* tool palette */
.workspace {
    flex: 1;
    min-height: 0;
    display: flex;
}
.palette {
    width: 70px;
    padding: 7px 3px 0 1px;
    border-bottom: 1px solid #888;
}
.grip {
    display: block;
    height: 4px;
    margin: 0 8px 5px;
    border: solid #bbb;
    border-width: 1px 0;
}
.tools {
    display: grid;
    grid-template-columns: 33px 33px;
    grid-auto-rows: auto;
}
.tools hr {
    grid-column: span 2;
    width: 100%;
    height: 1px;
    margin: 0 0 1px;
    border: 0;
    background: #bbb;
}
.tools button {
    position: relative;
    display: flex;
    align-items: center;
    justify-content: center;
    height: 33px;
}
.tools .active {
    width: 29px;
    height: 29px;
    margin: 2px;
}
.tools svg {
    width: 20px;
    height: 20px;
}
.letter {
    font: bold 24px/24px "Noto Sans", sans-serif;
    color: #333;
}
.fraction {
    font: bold 9px/10px "Noto Sans", sans-serif;
    color: #333;
}
.fraction i {
    display: block;
    border-top: 1px solid #777;
    font-style: normal;
    color: #bbb;
}
.fraction.value {
    color: #bbb;
}
.fraction.value i {
    color: #222;
}
.more {
    display: block;
    margin: 22px auto 0;
}
.more svg {
    width: 10px;
    height: 12px;
}

/* selection filter panel */
.panel {
    display: flex;
    flex-direction: column;
    width: 356px;
    border-right: 4px solid #c4c4c4;
}
.tabs {
    display: flex;
    gap: 3px;
    height: 30px;
    padding-left: 2px;
}
.tabs button {
    padding: 0 6px;
    background: #dadada;
    color: #888;
}
.tabs .current {
    border-bottom: 3px solid #0793d6;
    background: none;
    color: #0793d6;
    padding-top: 3px;
}
.panel-body {
    flex: 1;
    min-height: 0;
    display: flex;
    flex-direction: column;
    border: 1px solid #888;
}
.panel h2 {
    height: 21px;
    padding-left: 1px;
}
.panel .layers-title {
    height: 25px;
    padding-top: 5px;
}
.listbox {
    display: flex;
    padding: 1px;
    border: 1px solid #888;
    background: #fff;
}
.listbox ul {
    flex: 1;
    overflow: hidden;
    background: #0796d9;
    color: #fff;
}
.listbox li {
    display: flex;
    align-items: center;
    gap: 6px;
    height: 20px;
    padding-left: 3px;
}
.listbox li svg {
    width: 16px;
    height: 16px;
}
.scroll {
    width: 6px;
    margin: 0 5px;
    border-radius: 3px;
    background: #808080;
}
.types {
    height: 151px;
}
.types .scroll {
    height: 69px;
}
.layers {
    flex: 1;
    min-height: 0;
    margin-top: 6px;
}
.layers .scroll {
    height: 102px;
}
.presets {
    height: 82px;
    padding: 2px 1px;
    border: 1px solid #888;
    background: #fff;
}
.presets li {
    padding-left: 4px;
}
.presets li:nth-child(even) {
    background: #f3f4f4;
}
.chip {
    width: 16px;
    height: 16px;
    border: 1px solid #6ba3c8;
    background: #7396b8;
}
.chip.top {
    border-color: #7d3558;
    background: #7a2a4c;
}
.chip.bottom {
    border-color: #077dc4;
    background: #0777bd;
}
.chip.green {
    border-color: #26b29b;
    background: #259e93;
}
.chip.olive {
    border-color: #80a658;
    background: #75945c;
}
.chip.sand {
    border-color: #a09c60;
    background: #8b9065;
}
.push {
    height: 26px;
    border: 1px solid #808080;
    border-radius: 4px;
    background: #fff;
}
.reset {
    align-self: flex-end;
    width: 49px;
    margin-top: 3px;
}

/* board editor */
.editor {
    position: relative;
    flex: 1;
    min-width: 0;
    display: flex;
    flex-direction: column;
    border-bottom: 1px solid #888;
}
.command {
    display: flex;
    align-items: center;
    height: 34px;
    padding: 0 4px 0 7px;
}
.coords {
    width: 128px;
}
.command-line {
    position: relative;
    flex: 1;
}
.command-line input {
    display: block;
    width: 100%;
    height: 26px;
    padding: 0 6px;
    border: 1px solid #999;
    background: #d3d3d3;
}
.command-line input::placeholder {
    color: #808080;
}
.canvas-row {
    position: relative;
    flex: 1;
    min-height: 0;
    display: flex;
    background: #272727;
}
.board {
    flex: 1;
    min-width: 0;
    height: 100%;
}
.v-scroll {
    width: 16px;
    border: solid #f4f4f4;
    border-width: 0 5px 4px;
    background: linear-gradient(#f4f4f4 494px, #808080 494px);
}
.side-tab {
    position: absolute;
    top: 9px;
    right: 19px;
    width: 27px;
    height: 140px;
    padding: 8px 6px;
    background: #444;
    color: #fff;
    font-weight: bold;
}
.side-tab svg {
    width: 16px;
    height: 16px;
    margin-bottom: 6px;
}
.side-tab span {
    writing-mode: vertical-rl;
    font-size: 11px;
}
.h-scroll {
    height: 6px;
    margin: 5px 16px 4px 48px;
    border-radius: 3px;
    background: #808080;
}
.outline {
    fill: none;
    stroke: #a8a8a8;
    stroke-width: 2;
}
.trace {
    fill: none;
    stroke: #a50b0f;
    stroke-width: 5;
    stroke-linejoin: round;
}
.pad {
    fill: #a50b0f;
}
.mask {
    fill: #c4282d;
}
.origin {
    fill: none;
    stroke: #9c9a35;
}
.cross {
    stroke: #a08c8c;
}
.label {
    font: 17px "Liberation Sans", sans-serif;
    fill: #a0a0a0;
}
.pin {
    fill: #d03a3a;
}
.hello {
    font: 24px "Liberation Sans", sans-serif;
    fill: #b01218;
}

/* DRC dialog */
.dialog {
    position: absolute;
    left: 543px;
    right: 0;
    top: 88px;
    height: 438px;
    display: flex;
    flex-direction: column;
    background: #eee;
    box-shadow: 0 4px 14px #0008;
}
.dialog-title {
    display: flex;
    align-items: center;
    height: 30px;
    padding-left: 8px;
    background: #fff;
    color: #111;
    font-family: Roboto, sans-serif;
}
.dialog-title .app-icon {
    margin-right: 5px;
}
.dialog-title button {
    margin-left: auto;
}
.dialog-title button svg {
    width: 9px;
    height: 10px;
}
.errors {
    flex: 1;
    margin: 11px 0 0 11px;
    border: 1px solid #1a90cc;
}
.errors table {
    width: 100%;
    border-spacing: 0;
    table-layout: fixed;
}
.errors th {
    position: relative;
    height: 23px;
    padding: 0 5px;
    background: #fff;
    font-weight: normal;
    text-align: left;
}
.errors .layer-col {
    width: 42px;
    padding: 0 4px;
    border-left: 1px solid #ddd;
}
.sort {
    position: absolute;
    left: 49%;
    top: 1px;
    width: 8px;
    height: 4px;
}
.errors td {
    height: 16px;
    padding: 0 4px;
    white-space: nowrap;
}
.errors .group {
    font-weight: bold;
}
.errors td:first-child {
    padding-left: 7px;
}
.errors .item td:first-child {
    padding-left: 27px;
}
.arrow {
    display: inline-block;
    width: 8px;
    height: 8px;
    margin-right: 8px;
    background: #666;
    clip-path: polygon(15% 0, 90% 50%, 15% 100%);
}
.arrow.open {
    clip-path: polygon(0 10%, 100% 10%, 50% 100%);
}
.arrow.none {
    background: none;
}
.errors .selected td {
    height: 18px;
    background: #0796d9;
    color: #fff;
}
.errors .selected td:first-child {
    padding-left: 63px;
}
.selected svg {
    display: inline-block;
    width: 12px;
    height: 11px;
    margin-right: 6px;
    vertical-align: -2px;
}
.dialog-foot {
    display: flex;
    justify-content: space-between;
    padding: 6px 0 11px 11px;
}
.dialog-foot label {
    display: flex;
    align-items: center;
    gap: 6px;
    height: 26px;
}
.dialog-foot input {
    appearance: none;
    width: 14px;
    height: 14px;
    margin: 0;
    border: 1px solid #777;
    border-radius: 2px;
    background: #fff;
}
.dialog-buttons {
    display: flex;
    flex-direction: column;
    gap: 6px;
    width: 190px;
}

/* status bar */
.statusbar {
    display: flex;
    align-items: center;
    height: 25px;
    padding-left: 2px;
}
.status-text {
    flex: 1;
}
.statusbar svg {
    width: 26px;
    height: 20px;
    padding: 0 2px 0 3px;
    border-left: 1px solid #ccc;
}
```
